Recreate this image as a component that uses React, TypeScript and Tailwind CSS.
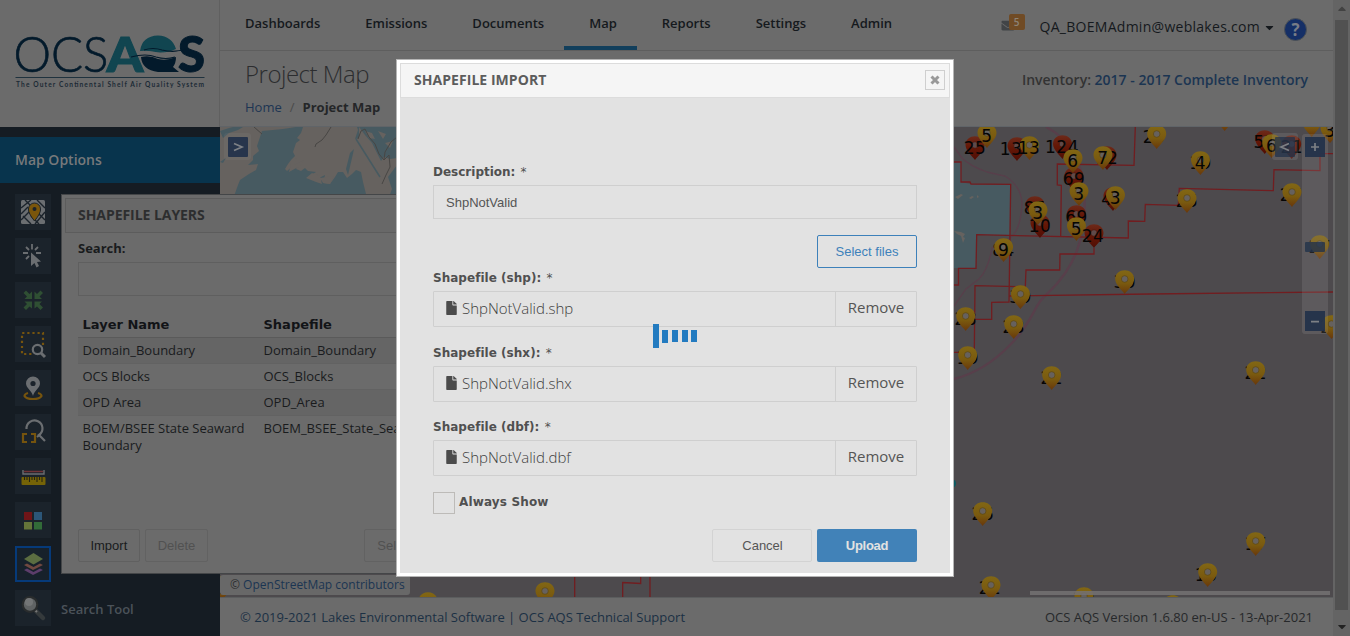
import React from "react";
import { FaFile, FaEnvelope, FaCaretDown, FaCaretUp } from "react-icons/fa";

type Pin = { x: number; y: number; red?: boolean; back?: string; bx?: number; front?: string; fx?: number };

const pins: Pin[] = [
  { x: 975, y: 136, red: true, front: "25" },
  { x: 987, y: 124, front: "5" },
  { x: 1017, y: 137, red: true, front: "13", fx: 1011 },
  { x: 1029.5, y: 136, front: "13", fx: 1029 },
  { x: 1062.5, y: 135, red: true, front: "124", fx: 1062 },
  { x: 1074, y: 167, red: true, front: "69" },
  { x: 1073, y: 149, front: "6" },
  { x: 1079, y: 182, front: "3" },
  { x: 1107, y: 146, red: true, front: "12" },
  { x: 1103, y: 146, front: "7" },
  { x: 1113, y: 187, red: true, front: "4", fx: 1107 },
  { x: 1115.5, y: 186, front: "3" },
  { x: 1040, y: 214, red: true, front: "10" },
  { x: 1035, y: 196, red: true, front: "85" },
  { x: 1038, y: 201, front: "3" },
  { x: 1076.5, y: 205, red: true, front: "69" },
  { x: 1076.5, y: 217, front: "5" },
  { x: 1094, y: 224, red: true, front: "24", fx: 1093 },
  { x: 1003.6, y: 238, back: "84", front: "9" },
  { x: 1020.5, y: 285, back: "39" },
  { x: 1124.7, y: 270, back: "30" },
  { x: 1156.7, y: 125, back: "20", bx: 1154 },
  { x: 1200.5, y: 151, back: "19", front: "4" },
  { x: 1187, y: 189, back: "25" },
  { x: 1292, y: 183, back: "27", bx: 1291 },
  { x: 1224.7, y: 107 },
  { x: 1264.7, y: 130, red: true, front: "57" },
  { x: 1271.7, y: 134, front: "6" },
  { x: 1291.7, y: 135, red: true, front: "21" },
  { x: 1311.7, y: 113 },
  { x: 1330, y: 119, front: "3" },
  { x: 1319.7, y: 235, back: "27" },
  { x: 1331.5, y: 315, back: "23" },
  { x: 965.7, y: 307, back: "28" },
  { x: 967.7, y: 346, back: "19" },
  { x: 1013.7, y: 315, back: "23" },
  { x: 1051.7, y: 366, back: "22" },
  { x: 1255.7, y: 361, back: "22" },
  { x: 982.7, y: 502, back: "26" },
  { x: 1255.7, y: 532, back: "17" },
  { x: 1207.7, y: 563, back: "16", bx: 1206 },
  { x: 991, y: 576, back: "22", bx: 990 },
  { x: 1084, y: 587, back: "20" },
  { x: 1172.7, y: 595 },
  { x: 428, y: 592 },
  { x: 545, y: 582 },
  { x: 222, y: 576, front: "5", fx: 224 },
];

function MapPin({ x, y, red, back, bx, front, fx }: Pin) {
  return (
    <g>
      {back && (
        <text x={bx ?? x} y={y + 18} textAnchor="middle">
          {back}
        </text>
      )}
      <path
        d={`M${x} ${y + 24} C${x - 2.5} ${y + 20.5} ${x - 9.5} ${y + 14.5} ${x - 9.5} ${y + 9} C${x - 9.5} ${y - 2.8} ${x + 9.5} ${y - 2.8} ${x + 9.5} ${y + 9} C${x + 9.5} ${y + 14.5} ${x + 2.5} ${y + 20.5} ${x} ${y + 24}Z`}
        fill={red ? "url(#redPin)" : "url(#goldPin)"}
      />
      <circle cx={x} cy={y + 9} r="3.3" fill={red ? "#5f4a4a" : "#66615e"} stroke={red ? "#501208" : "#5f480d"} strokeWidth="0.7" />
      {front && (
        <text x={fx ?? x} y={y + 18} textAnchor="middle">
          {front}
        </text>
      )}
    </g>
  );
}

function MapCanvas() {
  return (
    <svg className="block h-[470px] w-[1113px]" viewBox="220 127 1113 470">
      <defs>
        <linearGradient id="goldPin" x1="0" y1="0" x2="0" y2="1">
          <stop offset="0" stopColor="#826714" />
          <stop offset="0.55" stopColor="#7a5a0f" />
          <stop offset="1" stopColor="#68370b" />
        </linearGradient>
        <linearGradient id="redPin" x1="0" y1="0" x2="0" y2="1">
          <stop offset="0" stopColor="#6d2a1a" />
          <stop offset="0.45" stopColor="#651706" />
          <stop offset="1" stopColor="#500e05" />
        </linearGradient>
      </defs>
      <rect x="220" y="127" width="1113" height="470" fill="#4d4a4d" />
      <rect x="220" y="127" width="180" height="72" fill="#66625f" />
      <g fill="#475a61">
        <path d="M262 131 L273 130 283 129 296 127 303 127 301 133 297 138 300 140 296 143 293 152 295 156 291 160 288 164 285 169 287 171 293 166 298 164 296 169 301 171 305 168 308 171 316 172 311 175 319 178 325 175 323 183 330 184 335 177 338 172 343 172 347 178 352 174 356 170 361 172 363 182 366 194 368 199 233 199 238 185 240 180 249 174 256 170 258 164 248 165 253 160 253 156 259 151 257 146 Z" />
        <path d="M359 127 L397 127 397 158 390 159 384 157 381 161 377 153 372 143 365 135Z" />
        <path d="M388 177 L397 165 397 199 389 197 392 189Z" />
        <path d="M220 131 L229 128 233 127 243 127 238 130 229 133 223 138Z" />
        <path d="M220 162 L226 158 223 163Z" />
        <path d="M355 139 L358 130 357 127 359 127 359 138Z" />
        <path d="M346 169 L350 153 354 149 352 158 348 175Z" />
      </g>
      <path d="M356 139 L380 177" stroke="#475a61" strokeWidth="1.5" fill="none" />
      <g fill="#66625f">
        <path d="M291 163 L297 158 294 165 304 160 300 166 289 172Z M306 178 L312 173 320 176 322 184 316 182Z M320 178 L334 176 330 184 323 183Z M365 131 l7 2 3 6 -6 -1z M378 131 l8 3 -3 5z M385 143 l8 -2 -3 7z" />
      </g>
      <path d="M331 127 L326 135 322 140 316 144 315 147 M358 139 L361 131 365 129 369 137 375 144 379 154 384 160 385 152 391 142 397 137 M384 160 L389 155 390 167 386 175 382 184 M254 127 L262 134" stroke="#484644" strokeWidth="1" fill="none" />
      <path d="M954 162 H961 V182 L970 184 1010 184 1010 235 976.7 235 976 268 954 268Z" fill="#475a61" />
      <path d="M955 197 l6 -3 2 1 -5 4z M969 198 l3 -2 2 1 -3 2z M954 231 l7 1 4 2 -2 3 -6 -3z M961 236 l4 2 -2 5z M977 195 l2 2 -2 1z" fill="#66625f" />
      <g fill="none" stroke="#583f4b">
        <path d="M1046 127 C1068 138 1082 160 1084 190 C1088 240 1072 270 1049 292 C1032 306 1035 320 1010 345 Q985 371 954 379" strokeWidth="2.4" />
        <path d="M954 147 L962 158 Q970 166 987 172 L1005 176 Q1021 186 1022 203 Q1021 233 1007 240 L992 248 Q988 270 979 279 L966 289 954 306" strokeWidth="1.3" />
      </g>
      <g fill="none" stroke="#711d20" strokeWidth="1.3">
        <path d="M954 162 H961 V182 H970 L971 184 1010.700 184.300 1009 302 991.700 302.300 V319.300 H974.500" />
        <path d="M954 285 H958.500 V268.300 H976 L976.700 234.700 1128.300 238 V221 L1144.700 221.300 1145.300 204.300 1178.300 205.300 1179.300 188.300 1273.300 190.700 1274 169.700 1320 170.700 V153.700 H1333" />
        <path d="M1060.700 236 L1061.300 185.300 1057.300 185 V164 L1134 165.300 1135.300 127" />
        <path d="M1094 248 V254 H1060 L1059.700 270 H1026 L1025.300 286.700 975 285.700 974.300 352.300 H954" />
        <path d="M1009 296 L1150 294 1333 292" />
        <path d="M574.700 575 V597 M640.700 575 V583.500 L622.700 582.500 V597 M650 575 V597" />
      </g>
      <circle cx="952" cy="483.500" r="4" fill="#0d5b63" />
      <g fontFamily="DejaVu Sans" fontSize="17" letterSpacing="0.5" fill="#050505">
        {pins.map((p, i) => (
          <MapPin key={i} {...p} />
        ))}
      </g>
      <g fill="#a9a9a9" fillOpacity="0.18">
        <rect x="224" y="133" width="27" height="27" rx="3" fillOpacity="0.09" />
        <rect x="1272" y="133" width="26" height="27" rx="3" />
        <rect x="1302" y="134" width="26" height="200" rx="3" />
      </g>
      <g fill="#22324a" fillOpacity="0.93">
        <rect x="228" y="137" width="20" height="20" rx="1" />
        <rect x="1275" y="137" width="20" height="20" rx="1" fillOpacity="0.75" />
        <rect x="1305" y="137" width="20" height="20" />
        <rect x="1305" y="242" width="20" height="10" rx="1" fillOpacity="0.8" />
        <rect x="1305" y="311" width="20" height="20" />
      </g>
      <g stroke="#7d8085" strokeWidth="1.7" fill="none">
        <path d="M234 143.500 L242 147 234 150.500 M1289 143.500 L1281 147 1289 150.500 M1311 147 H1319 M1315 143 V151 M1311 321.700 H1319" />
      </g>
      <rect x="1030" y="591" width="300" height="4" fill="#747273" fillOpacity="0.85" />
    </svg>
  );
}

function Logo() {
  return (
    <svg className="block h-[127px] w-[219px]" viewBox="0 0 219 127">
      <g fontFamily="Lato">
        <text x="13.500" y="72" fontSize="50" fontWeight="300" fill="#031a2b" stroke="#031a2b" strokeWidth="0.7" textLength="95" lengthAdjust="spacingAndGlyphs">OCS</text>
        <text x="106.500" y="71.500" fontSize="48" fontWeight="900" fill="#114550" stroke="#114550" textLength="37" lengthAdjust="spacingAndGlyphs">A</text>
        <text x="178" y="71.500" fontSize="49" fontWeight="900" fill="#031a2b" stroke="#031a2b" textLength="27" lengthAdjust="spacingAndGlyphs">S</text>
      </g>
      <path d="M140 51 Q142 36 158 35.500 Q172 36 176 49 Q166 54 154 52 Q146 50 140 51Z" fill="#114550" />
      <path d="M141 57 Q150 55 158 59 Q167 61 176 57 Q176 63 173 67 L179 72 H158 Q142 70 141 57Z" fill="#031a2b" />
      <path d="M131 57 Q146 53 156 57 Q166 60 175 57 M144 50 Q153 47 162 50 Q174 53 186 49" fill="none" stroke="#031a2b" strokeWidth="1.200" />
      <path d="M139 53 Q150 51 160 54 Q170 56 180 52" fill="none" stroke="#6b6b6b" strokeWidth="2" />
      <path d="M15.500 77.500 H204.500" stroke="#162b39" strokeWidth="0.9" />
      <text x="16" y="86.500" fontFamily="Lato" fontSize="6.600" fontWeight="700" fill="#1b2a35" textLength="188">The Outer Continental Shelf Air Quality System</text>
    </svg>
  );
}

const toolIcons: React.ReactNode[] = [
  <>
    <rect x="6" y="6" width="24" height="24" rx="1.500" fill="#6b6e71" />
    <path d="M6 14 L16 6 M6 20 L13 13 M6 26 L18 14 M22 6 L30 14 M10 6 L16 12 M8 22 L16 30 M16 22 L24 30 M30 18 L20 30 M24 20 L30 26" stroke="#1b232b" strokeWidth="1.400" />
    <path d="M19.500 27 Q13 19 13.500 15 A6 6 0 0 1 25.500 15 Q26 19 19.500 27Z" fill="#7a560c" stroke="#1b232b" />
    <circle cx="19.500" cy="15" r="2" fill="#1b232b" />
  </>,
  <>
    <path d="M17 6 V11.500 M8 15 H13 M21 15 H26 M11 9 L14 12 M23 9 L20 12 M11 21 L14 18" stroke="#6b6e71" strokeWidth="1.800" />
    <path d="M16 14.500 L26 23.500 22 24 24 28 21.500 29.500 19.500 25 16 28Z" fill="#6b6e71" />
  </>,
  <path d="M17 9.500 V17 H9.500 L12 14.500 8.500 11 11 8.500 14.500 12Z M19.500 9.500 V17 H27 L24.500 14.500 28 11 25.500 8.500 22 12Z M17 26.500 V19.500 H9.500 L12 22 8.500 25.500 11 28 14.500 24.500Z M19.500 26.500 V19.500 H27 L24.500 22 28 25.500 25.500 28 22 24.500Z" fill="#2f4f33" />,
  <>
    <path d="M28 19 V7 H7 V28 H17" fill="none" stroke="#76540e" strokeWidth="2.200" strokeDasharray="2.200 2.900" />
    <circle cx="22.500" cy="23.500" r="4.700" fill="none" stroke="#6b6e71" strokeWidth="2.200" />
    <path d="M26 27 L30 31" stroke="#6b6e71" strokeWidth="3" />
  </>,
  <>
    <path d="M13 23 Q9.500 24 9.500 26 Q11 29 18 29 Q25 29 26.500 26 Q26.500 24 23 23" fill="none" stroke="#76540e" strokeWidth="2.200" />
    <path d="M18 26 C17 21 11 18 11 13.500 A7 7 0 0 1 25 13.500 C25 18 19 21 18 26Z" fill="#6b6e71" />
    <circle cx="18" cy="13.500" r="2.600" fill="#1b232b" />
  </>,
  <>
    <path d="M11.500 15 A8 8 0 1 1 24 21 L30 27 M22 23 L25.500 20" fill="none" stroke="#6b6e71" strokeWidth="2.200" />
    <path d="M12 20 H8 V28 H12 M16 20 H20 V28 H16" fill="none" stroke="#76540e" strokeWidth="2.200" />
  </>,
  <>
    <path d="M8 12 V16 H29 V12 M8 16" fill="none" stroke="#6b6e71" strokeWidth="1.400" />
    <path d="M9 13.500 H28" stroke="#713338" strokeWidth="1.500" />
    <rect x="6.500" y="19" width="24" height="8" rx="1" fill="#756307" />
    <path d="M9.500 19 v3 M12 19 v3 M14.500 19 v5 M17 19 v3 M19.500 19 v3 M22 19 v5 M24.500 19 v3 M27 19 v5" stroke="#272511" strokeWidth="1.100" />
  </>,
  <>
    <rect x="9" y="10" width="8" height="8" fill="#701518" />
    <rect x="19" y="10" width="8" height="8" fill="#2c5678" />
    <rect x="9" y="20" width="8" height="7.500" fill="#647439" />
    <rect x="19" y="20" width="8" height="7.500" fill="#326b38" />
  </>,
  <>
    <path d="M9 24 L18 29 28 24 25 22.500 18.500 26 12 22.500Z" fill="#5c3d6b" />
    <path d="M9 19 L18 24 28 19 25 17.500 18.500 21 12 17.500Z" fill="#704840" />
    <path d="M18.500 7 L28 13 18.500 18.500 9 13Z" fill="#5b6d41" />
  </>,
  <>
    <path d="M21 21 L28 28" stroke="#353a3c" strokeWidth="4.500" strokeLinecap="round" />
    <path d="M20 20 L22 22" stroke="#777" strokeWidth="2" />
    <circle cx="15" cy="14.500" r="7.300" fill="#606364" stroke="#292c2d" strokeWidth="2.200" />
    <circle cx="14" cy="12" r="4" fill="#737576" />
  </>,
];

const nav = ["Dashboards", "Emissions", "Documents", "Map", "Reports", "Settings", "Admin"];

const layers = [
  ["Domain_Boundary", "Domain_Boundary"],
  ["OCS Blocks", "OCS_Blocks"],
  ["OPD Area", "OPD_Area"],
];

function FileRow({ ext, className }: { ext: string; className: string }) {
  return (
    <div className={className}>
      <div className="h-[25px] font-['DejaVu_Sans'] text-[12px] leading-[24px] font-bold tracking-[0.03px]">
        Shapefile ({ext}): <span className="ml-px font-normal">*</span>
      </div>
      <div className="flex h-[36px] rounded-[1px] border border-[#cfcfcf]">
        <div className="flex flex-1 items-center pb-[2px] pl-[12px]">
          <FaFile className="h-[14px] w-[11px] text-[#4b4b4b]" />
          <span className="ml-[5px] text-[15px] font-light text-[#404040]">ShpNotValid.{ext}</span>
        </div>
        <div className="flex w-[81px] items-center justify-center border-l border-[#cfcfcf] pb-[4px] text-[15px] text-[#555]">Remove</div>
      </div>
    </div>
  );
}

function ImportDialog() {
  return (
    <div className="absolute top-[59px] left-[396px] h-[518px] w-[558px] border border-[#b5b5b5] bg-white p-[3px]">
      <div className="flex h-[35px] items-center justify-between border border-[#dcdcdc] bg-[#f5f5f5] pr-[4px] pl-[13px]">
        <span className="pb-px text-[14px] leading-[20px] font-bold tracking-[0.05px] text-[#5c5c5c]">SHAPEFILE IMPORT</span>
        <span className="-mt-px flex h-[20px] w-[20px] items-center justify-center border border-[#cfcfcf]">
          <svg viewBox="0 0 10 10" className="h-[10px] w-[10px]">
            <path d="M1.500 1.500 L8.500 8.500 M8.500 1.500 L1.500 8.500" stroke="#999" strokeWidth="3" />
          </svg>
        </span>
      </div>
      <div className="relative h-[475px] bg-[#e2e2e2] px-[33px] pt-[62px] text-[#505050]">
        <div className="h-[25px] font-['DejaVu_Sans'] text-[12px] leading-[25px] font-bold">
          Description: <span className="ml-px font-normal">*</span>
        </div>
        <div className="flex h-[34px] items-center border border-[#cfcfcf] pt-px pl-[12px] font-['Liberation_Sans'] text-[13px] text-[#555]">ShpNotValid</div>
        <div className="mt-[16px] flex justify-end">
          <div className="flex h-[33px] w-[100px] items-center justify-center rounded-[2px] border border-[#3d81ba] font-['Liberation_Sans'] text-[13px] text-[#3d81ba]">Select files</div>
        </div>
        <FileRow ext="shp" className="-mt-[2px]" />
        <FileRow ext="shx" className="mt-[14px]" />
        <FileRow ext="dbf" className="mt-[13px]" />
        <div className="mt-[16px] flex h-[22px]">
          <span className="h-[22px] w-[22px] border border-[#bdbbb8]" />
          <span className="ml-[4px] font-['DejaVu_Sans'] text-[12px] leading-[21px] font-bold tracking-[0.15px]">Always Show</span>
        </div>
        <div className="mt-[15px] flex justify-end gap-[5px] font-['Liberation_Sans'] text-[13px]">
          <div className="flex h-[33px] w-[100px] items-center justify-center rounded-[2px] border border-[#d3d3d3] pl-px text-[#555]">Cancel</div>
          <div className="flex h-[33px] w-[100px] items-center justify-center rounded-[2px] bg-[#4182b8] font-bold tracking-[-0.3px] text-[#e2e2e2]">Upload</div>
        </div>
        <div className="absolute top-[226px] left-[253px] flex items-center gap-[3px]">
          <span className="h-[24px] w-[6px] bg-[#237bc0]" />
          <span className="h-[13px] w-[6px] bg-[#237bc0]" />
          <span className="ml-[1px] h-[12px] w-[6px] bg-[#237bc0]" />
          <span className="ml-[1px] h-[12px] w-[6px] bg-[#237bc0]" />
          <span className="h-[12px] w-[6px] bg-[#237bc0]" />
        </div>
      </div>
    </div>
  );
}

function LayersPanel() {
  return (
    <div className="absolute top-[194px] left-[61px] h-[380px] w-[400px] border border-[#444648] bg-[#6b6b6b] p-[3px] text-[#191b1d]">
      <div className="h-[35px] border border-[#5c5c5c] bg-[#686868] pl-[12px] text-[14px] leading-[32px] font-bold tracking-[-0.05px] text-[#2d2e2f]">SHAPEFILE LAYERS</div>
      <div className="px-[13px]">
        <div className="h-[29px] text-[13px] leading-[30px] font-bold">Search:</div>
        <div className="h-[34px] border border-[#5f5f5f]" />
        <div className="mt-[16px] flex h-[26px] border-b border-[#5a5a5a] font-['DejaVu_Sans'] text-[13px] leading-[25px] font-bold text-[#121417]">
          <span className="w-[181px] pl-[4.500px]">Layer Name</span>
          <span className="pl-[4.500px]">Shapefile</span>
        </div>
        {layers.map(([name, file], i) => (
          <div key={name} className={`flex h-[26px] border-b border-[#626262] text-[13px] leading-[25px] ${i % 2 === 0 ? "bg-[#656565]" : ""}`}>
            <span className="w-[181px] pl-[4.500px]">{name}</span>
            <span className="pl-[4.500px]">{file}</span>
          </div>
        ))}
        <div className="flex pt-[4px] text-[13px] leading-[17px]">
          <span className="w-[181px] pl-[4.500px]">BOEM/BSEE State Seaward Boundary</span>
          <span className="pl-[4.500px] whitespace-nowrap">BOEM_BSEE_State_Seaward</span>
        </div>
        <div className="mt-[75px] flex font-['Liberation_Sans'] text-[13px] leading-[31px]">
          <span className="h-[33px] w-[62px] rounded-[2px] border border-[#606060] text-center">Import</span>
          <span className="ml-[5px] h-[33px] w-[64px] rounded-[2px] border border-[#626262] text-center text-[#515151]">Delete</span>
          <span className="ml-[156px] h-[33px] w-[80px] rounded-[2px] border border-[#626262] pl-[12px] text-[#515151]">Select</span>
        </div>
      </div>
    </div>
  );
}

export default function App() {
  return (
    <div className="relative flex h-[636px] w-[1350px] overflow-hidden bg-[#6b6b6b] font-['Open_Sans',sans-serif]">
      <aside className="flex w-[220px] shrink-0 flex-col bg-[#151c23]">
        <div className="h-[127px] border-r border-[#606060] bg-[#6b6b6b]">
          <Logo />
        </div>
        <div className="mt-[10px] h-[46px] bg-[#08344d] pl-[15px] text-[14px] leading-[45px] font-semibold text-[#77797b]">Map Options</div>
        <div className="mt-[11px] flex flex-col gap-[8px] pl-[15px]">
          {toolIcons.map((icon, i) => (
            <div key={i} className="flex h-[36px] items-center">
              <svg viewBox="0 0 36 36" className={`h-[36px] w-[36px] shrink-0 ${i === 8 ? "bg-[#17212b] outline-2 -outline-offset-2 outline-[#063a79]" : "bg-[#1b232b]"}`}>
                {icon}
              </svg>
              {i === 9 && <span className="ml-[10px] pt-[4px] text-[13px] font-semibold text-[#4b5259]">Search Tool</span>}
            </div>
          ))}
        </div>
      </aside>

      <main className="flex w-[1113px] shrink-0 flex-col">
        <header className="flex h-[51px] justify-between border-b border-[#5e5e5e]">
          <nav className="flex text-[13px] leading-[46px] font-semibold text-[#15191d]">
            {nav.map((n) => (
              <span key={n} className={`h-[50px] pr-[20px] pl-[25px] ${n === "Map" ? "border-b-4 border-[#123f5c]" : ""}`}>
                {n}
              </span>
            ))}
          </nav>
          <div className="flex pr-[26px]">
            <div className="relative mt-[13px] h-[20px] w-[39px]">
              <FaEnvelope className="absolute top-[6px] left-0 h-[13px] w-[14px] text-[#414447]" />
              <span className="absolute top-[1px] left-[8px] h-[16px] w-[16px] rounded-[2px] bg-[#704b25] text-center text-[10px] leading-[17px] font-semibold text-[#8c8377]">5</span>
            </div>
            <span className="text-[14px] leading-[54px] tracking-[0.28px] text-[#15191d]">QA_BOEMAdmin@weblakes.com</span>
            <FaCaretDown className="mt-[21px] ml-[4px] h-[13px] w-[11px] text-[#15191d]" />
            <span className="mt-[18px] ml-[9px] h-[23px] w-[23px] rounded-full border border-[#4c5156] bg-[#152f66] text-center text-[17px] leading-[21px] font-bold text-[#777c86]">?</span>
          </div>
        </header>
        <div className="flex h-[76px] justify-between border-b border-[#606468] pr-[25px] pl-[25px]">
          <div>
            <h1 className="pt-[6px] text-[24px] leading-[34px] font-light tracking-[-0.5px] text-[#2c2d2f]">Project Map</h1>
            <div className="mt-[6px] flex text-[13px] leading-[20px] text-[#242628]">
              <span className="text-[#1d3553]">Home</span>
              <span className="mx-[8px] text-[#4a4a4a]">/</span>
              <span className="font-bold">Project Map</span>
            </div>
          </div>
          <div className="pt-[19px] text-[14px] leading-[20px] font-semibold text-[#333]">
            Inventory: <span className="text-[#1b3552]">2017 - 2017 Complete Inventory</span>
          </div>
        </div>
        <div className="relative h-[470px]">
          <MapCanvas />
          <div className="absolute bottom-[2px] left-0 h-[20px] w-[190px] rounded-[3px] bg-[#686868] pl-[10px] text-[12px] leading-[19px] whitespace-nowrap text-[#2c2d2f]">
            © <span className="text-[#1b3552]">OpenStreetMap contributors</span>
          </div>
        </div>
        <footer className="flex h-[39px] justify-between border-t border-[#5b5d5e] pr-[20px] pl-[20px] text-[13px] leading-[39px] text-[#1b3044]">
          <span>© 2019-2021 Lakes Environmental Software | OCS AQS Technical Support</span>
          <span className="text-[#26282a]">OCS AQS Version 1.6.80 en-US - 13-Apr-2021</span>
        </footer>
      </main>

      <div className="flex w-[17px] flex-col items-center justify-between bg-[#646464]">
        <FaCaretUp className="mt-[2px] h-[13px] w-[10px] text-[#424242]" />
        <div className="-mt-[6px] h-[590px] w-[13px] bg-[#515151]" />
        <FaCaretDown className="mb-[3px] h-[13px] w-[10px] text-[#222]" />
      </div>

      <LayersPanel />
      <ImportDialog />
    </div>
  );
}
